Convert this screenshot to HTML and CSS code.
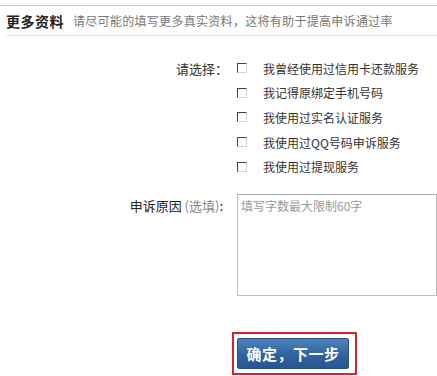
FILE: index.html
```html
<!DOCTYPE html>
<html lang="zh-CN">
<head>
	<meta charset="UTF-8">
	<title>更多资料</title>
	<link rel="stylesheet" href="styles.css">
</head>
<body>

	<div class="panel">
		<div class="panel-head">
			<span class="head-title">更多资料</span>
			<span class="head-tip">请尽可能的填写更多真实资料，这将有助于提高申诉通过率</span>
		</div>

		<div class="form">
			<div class="row">
				<div class="label">请选择：</div>
				<div class="field">
					<label class="check"><span class="box"></span>我曾经使用过信用卡还款服务</label>
					<label class="check"><span class="box"></span>我记得原绑定手机号码</label>
					<label class="check"><span class="box"></span>我使用过实名认证服务</label>
					<label class="check"><span class="box"></span>我使用过QQ号码申诉服务</label>
					<label class="check"><span class="box"></span>我使用过提现服务</label>
				</div>
			</div>

			<div class="row row-reason">
				<div class="label label-reason">申诉原因 <span class="opt">(选填)</span>:</div>
				<div class="field">
					<textarea class="reason" placeholder="填写字数最大限制60字"></textarea>
				</div>
			</div>

			<div class="row row-btn">
				<div class="label"></div>
				<div class="field">
					<div class="btn-frame">
						<button class="btn">确定，下一步</button>
					</div>
				</div>
			</div>
		</div>
	</div>

</body>
</html>
```

FILE: styles.css
```css
html,body{ margin: 0;padding: 0;background: #fff; }
body{ font-family: "Noto Sans CJK SC", "Liberation Sans", sans-serif;font-size: 12px;color: #333; }

.panel{ margin-top: 5px;border-top: 1px solid #c9c9c9; }
.panel-head{ margin-left: 6px;height: 29px;border-bottom: 1px solid #e4e4e4;
		display: flex;align-items: center; }
.head-title{ font-size: 14px;font-weight: bold;color: #222;letter-spacing: 0.5px; }
.head-tip{ margin-left: 9px;color: #777;font-size: 12px;letter-spacing: 0.3px; }

.form{ padding-top: 20px; }
.row{ display: flex;align-items: flex-start; }
.label{ width: 228px;flex: none;text-align: right;font-size: 13px;line-height: 25px;color: #333; }
.field{ margin-left: 9px;flex: 1; }

.check{ display: flex;align-items: center;height: 24.6px;color: #333;font-size: 12px; }
.box{ width: 8px;height: 8px;margin-right: 16px;
		border-top: 1px solid #444;border-left: 1px solid #444;
		border-right: 1px solid #d4d4d4;border-bottom: 1px solid #d4d4d4;
		box-sizing: content-box; }

.row-reason{ margin-top: 15px; }
.label-reason{ padding-right: 5px;width: 223px;font-size: 13px;line-height: 24px;color: #222; }
.opt{ color: #888;font-weight: normal; }
.reason{ display: block;width: 100%;height: 102px;box-sizing: border-box;margin: 0;
		border: 1px solid #bdbdbd;border-top-color: #a9a9a9;padding: 2px 3px;resize: none;
		font-family: "Noto Sans CJK SC", "Liberation Sans", sans-serif;font-size: 12px;color: #333; }
.reason::placeholder{ color: #9a9a9a; }

.row-btn{ margin-top: 36px; }
.field .btn-frame{ display: inline-block;margin-left: -5px;border: 2px solid #d5232f;padding: 4px 6px 4px 3px; }
.btn{ display: block;width: 112px;height: 31px;border: 1px solid #2b5283;border-radius: 2px;
		background: linear-gradient(#4f83bd, #2f639f 55%, #255690);
		color: #fff;font-family: "Noto Sans CJK SC", sans-serif;font-size: 15px;font-weight: bold;
		padding: 0;letter-spacing: 0.5px; }
```
